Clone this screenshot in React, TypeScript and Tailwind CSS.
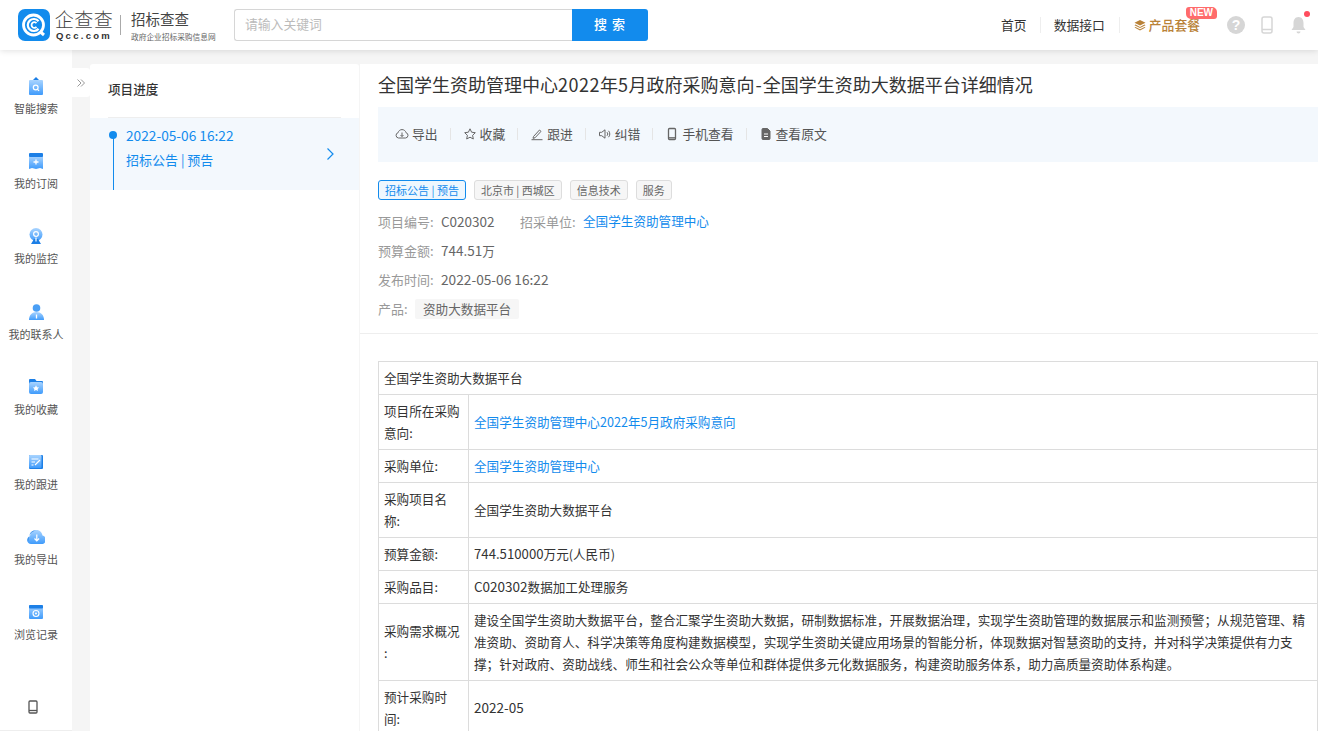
import React from "react";

const cjk = { fontFamily: '"Noto Sans CJK SC", "Liberation Sans", sans-serif' };

function Grad({ id }: { id: string }) {
  return (
    <defs>
      <linearGradient id={id} x1="0" y1="0" x2="0" y2="1">
        <stop offset="0" stopColor="#a9d4ff" />
        <stop offset="1" stopColor="#3f9bfb" />
      </linearGradient>
    </defs>
  );
}

const side: { label: string; icon: React.ReactNode }[] = [
  {
    label: "智能搜索",
    icon: (
      <svg width="18" height="20" viewBox="0 0 18 20">
        <Grad id="g1" />
        <path d="M3 4h12a1 1 0 0 1 1 1v13a1 1 0 0 1-1 1H3a1 1 0 0 1-1-1V5a1 1 0 0 1 1-1z" fill="url(#g1)" />
        <path d="M6 4l3-3 3 3z" fill="#1c7fe6" />
        <circle cx="8.7" cy="11.5" r="2.4" fill="none" stroke="#fff" strokeWidth="1.2" />
        <path d="M10.5 13.3l1.6 1.6" stroke="#fff" strokeWidth="1.2" />
      </svg>
    ),
  },
  {
    label: "我的订阅",
    icon: (
      <svg width="14" height="16" viewBox="0 0 14 16">
        <Grad id="g2" />
        <path d="M0 3h14v13l-3-1-4 1-4-1-3 1z" fill="url(#g2)" />
        <rect width="14" height="4" rx="1" fill="#1c7fe6" />
        <path d="M7 6.5v5M4.5 9h5" stroke="#fff" strokeWidth="1.3" />
      </svg>
    ),
  },
  {
    label: "我的监控",
    icon: (
      <svg width="14" height="16" viewBox="0 0 14 16">
        <Grad id="g3" />
        <circle cx="7" cy="6.5" r="6.5" fill="url(#g3)" />
        <circle cx="7" cy="6" r="2.4" fill="none" stroke="#fff" strokeWidth="1.2" />
        <path d="M2 16l3-5h4l3 5z" fill="#1c7fe6" />
        <path d="M7 9.5v4" stroke="#fff" strokeWidth="1.2" />
      </svg>
    ),
  },
  {
    label: "我的联系人",
    icon: (
      <svg width="15" height="16" viewBox="0 0 15 16">
        <Grad id="g4" />
        <circle cx="7.5" cy="4" r="3.8" fill="#4a9ff5" />
        <path d="M0 16c0-5 3-8 7.5-8S15 11 15 16z" fill="url(#g4)" />
        <path d="M7.5 10.5v4" stroke="#fff" strokeWidth="1.3" />
      </svg>
    ),
  },
  {
    label: "我的收藏",
    icon: (
      <svg width="14" height="15" viewBox="0 0 14 15">
        <Grad id="g5" />
        <path d="M1 0h5l1.5 2H13a1 1 0 0 1 1 1v3H0V1a1 1 0 0 1 1-1z" fill="#1c7fe6" />
        <rect y="3" width="14" height="12" rx="2" fill="url(#g5)" />
        <path d="M7 6.3l1 2 2.100.2-1.500 1.500.4 2.100L7 11l-2 1.100.4-2.100L3.900 8.500 6 8.300z" fill="#fff" />
      </svg>
    ),
  },
  {
    label: "我的跟进",
    icon: (
      <svg width="14" height="14" viewBox="0 0 14 14">
        <Grad id="g6" />
        <rect width="14" height="14" rx="1" fill="#1c7fe6" />
        <rect width="12.500" height="13" rx="1" fill="url(#g6)" />
        <path d="M2.500 4h7M2.500 7h3.500M2.500 10h2M6 10l5-5" stroke="#fff" strokeWidth="1.100" />
      </svg>
    ),
  },
  {
    label: "我的导出",
    icon: (
      <svg width="18" height="14" viewBox="0 0 18 14">
        <Grad id="g7" />
        <path d="M4 14a4 4 0 0 1-1-7.800C3.500 2.500 6.500 0 9.500 0c3.500 0 5.500 2.500 6 5.500A4.300 4.300 0 0 1 14 14z" fill="url(#g7)" />
        <path d="M1.500 9C1.500 5 5 1 9 .5 5 0 2.500 3 2.500 6 1 7 0 9 1 12z" fill="#1c7fe6" />
        <path d="M9.800 4.500v6M7.500 8.500l2.300 2.300 2.300-2.300" stroke="#fff" strokeWidth="1.200" fill="none" />
      </svg>
    ),
  },
  {
    label: "浏览记录",
    icon: (
      <svg width="14" height="14" viewBox="0 0 14 14">
        <Grad id="g8" />
        <rect width="14" height="14" rx="1" fill="url(#g8)" />
        <rect width="14" height="3.500" rx="1" fill="#1c7fe6" />
        <circle cx="7" cy="8.500" r="3" fill="none" stroke="#fff" strokeWidth="1.100" />
        <circle cx="7" cy="8.500" r="1" fill="#fff" />
      </svg>
    ),
  },
];

const act = (d: React.ReactNode) => (
  <svg width="14" height="14" viewBox="0 0 14 14" fill="none" stroke="#666" strokeWidth="1">
    {d}
  </svg>
);

const actions: { label: string; icon: React.ReactNode }[] = [
  {
    label: "导出",
    icon: act(
      <>
        <path d="M3.500 11a2.700 2.700 0 0 1-.400-5.300C3.600 3.700 5.200 2.600 7 2.600c2 0 3.500 1.200 4 3.100A2.700 2.700 0 0 1 10.500 11z" />
        <path d="M7 5.500v4M5.500 8L7 9.500 8.500 8" />
      </>
    ),
  },
  {
    label: "收藏",
    icon: act(<path d="M7 1.800l1.600 3.400 3.700.5-2.700 2.600.7 3.700L7 10.200l-3.300 1.800.7-3.700L1.700 5.700l3.700-.5z" />),
  },
  {
    label: "跟进",
    icon: act(
      <>
        <path d="M3.500 9.500l6-6.500 1.500 1.400-6 6.400-2 .5z" />
        <path d="M1.500 12.700h11" />
      </>
    ),
  },
  {
    label: "纠错",
    icon: act(
      <>
        <path d="M1.500 5.300h2.200L7 2.800v8.400L3.700 8.700H1.500z" />
        <path d="M9 5.200a2.600 2.600 0 0 1 0 3.600M10.500 3.800a4.600 4.600 0 0 1 0 6.400" />
      </>
    ),
  },
  {
    label: "手机查看",
    icon: act(
      <>
        <rect x="3.500" y="1.500" width="7" height="11" rx="1" strokeWidth="1.300" />
        <path d="M3.500 10.800h7" strokeWidth="1.300" />
      </>
    ),
  },
  {
    label: "查看原文",
    icon: act(
      <>
        <path d="M3 2.500A1 1 0 0 1 4 1.500h4.500L11 4v7.500a1 1 0 0 1-1 1H4a1 1 0 0 1-1-1z" fill="#666" />
        <path d="M5 7h4M5 9.500h4" stroke="#fff" />
      </>
    ),
  },
];

const link = "text-[#128bed]";
const td = "border border-[#dcdcdc] px-[5px] py-[5px] leading-[22px] align-middle font-normal text-left";
const num = "text-[13.500px]";
const tnum = "text-[13.500px] leading-none";

export default function App() {
  return (
    <div style={cjk} className="w-[1318px] h-[731px] overflow-hidden bg-[#f5f5f5] flex flex-col text-[#333]">
      <header className="relative z-10 h-[50px] shrink-0 bg-white shadow-[0_1px_6px_rgba(0,0,0,0.12)] flex items-center">
        <div className="ml-[18px] flex items-center w-[216px] shrink-0">
          <svg width="32" height="32" viewBox="0 0 32 32" className="shrink-0">
            <rect width="32" height="32" rx="7" fill="#128bed" />
            <circle cx="15.500" cy="16" r="10" fill="none" stroke="#fff" strokeWidth="2.800" />
            <path d="M20.500 12.300a6 6 0 1 0 0 7.400" fill="none" stroke="#fff" strokeWidth="2.200" />
            <path d="M18.500 14.200a2.800 2.800 0 1 0 0 3.600" fill="none" stroke="#fff" strokeWidth="1.800" />
            <path d="M22.500 23l3.500 3" stroke="#fff" strokeWidth="3" />
          </svg>
          <div className="ml-[5px] flex flex-col items-center w-[58px]">
            <span className="text-[19px] leading-[20px] font-light text-[#444] tracking-[0.5px] whitespace-nowrap">企查查</span>
            <span style={{ fontFamily: '"Liberation Sans", sans-serif' }} className="text-[9.500px] leading-[12px] mt-[1px] font-bold text-[#333] tracking-[2.300px] whitespace-nowrap">Qcc.com</span>
          </div>
          <div className="w-px h-[20px] bg-[#aaa] ml-[7px]" />
          <div className="ml-[10px] flex flex-col">
            <span className="text-[14.500px] leading-[20px] text-[#444] whitespace-nowrap">招标查查</span>
            <span className="text-[7.700px] leading-[11px] mt-[2px] text-[#666] whitespace-nowrap">政府企业招标采购信息网</span>
          </div>
        </div>
        <div className="flex h-[32px] ml-0">
          <div className="w-[338px] h-full border border-[#d6d6d6] border-r-0 rounded-l-[3px] px-[10px] text-[12.800px] leading-[28px] text-[#bbb]">请输入关键词</div>
          <div className="w-[76px] h-full bg-[#128bed] rounded-r-[3px] text-white text-[13px] leading-[30px] text-center font-medium tracking-[1px]">搜 索</div>
        </div>
        <div className="ml-auto flex items-center h-full text-[12.800px] text-[#333]">
          <span>首页</span>
          <div className="w-px h-[16px] bg-[#eee] mx-[13px]" />
          <span>数据接口</span>
          <div className="w-px h-[16px] bg-[#eee] mx-[14px]" />
          <div className="relative flex items-center text-[#b98238] font-medium">
            <svg width="12" height="12" viewBox="0 0 12 12" className="mr-[3px]" fill="#b98238">
              <path d="M6 1l5.500 2.800L6 6.600.5 3.800z" />
              <path d="M1.500 5.600L6 8l4.500-2.400 1 .6L6 9.100.5 6.200z" />
              <path d="M1.500 7.900L6 10.300l4.500-2.400 1 .6L6 11.400.5 8.500z" />
            </svg>
            产品套餐
            <span style={{ fontFamily: '"Liberation Sans", sans-serif' }} className="absolute -top-[8px] -right-[17px] h-[12px] px-[4px] bg-[#ff6b6b] text-white text-[10px] leading-[12px] font-bold rounded-[3px_5px_3px_5px]">NEW</span>
          </div>
          <svg width="20" height="20" viewBox="0 0 20 20" className="ml-[26px]">
            <circle cx="10" cy="10" r="9" fill="#d6d6d6" />
            <text x="10" y="15" textAnchor="middle" fontSize="14" fontWeight="700" fill="#fff" fontFamily="Liberation Sans">?</text>
          </svg>
          <svg width="12" height="18" viewBox="0 0 12 18" className="ml-[15px]" fill="none" stroke="#d6d6d6" strokeWidth="1.500">
            <rect x="1" y="1" width="10" height="16" rx="2" />
            <path d="M1 13.500h10" />
          </svg>
          <div className="relative ml-[18px] mr-[12px]">
            <svg width="15" height="18" viewBox="0 0 15 18" fill="#d6d6d6" className="block">
              <path d="M7.500 1C11 1 12.500 4 12.500 7v4l2 3H.5l2-3V7C2.500 4 4 1 7.500 1z" />
              <path d="M5.500 15.500h4a2 2 0 0 1-4 0z" />
            </svg>
            <span className="absolute -top-[5px] right-[-4px] w-[6px] h-[6px] rounded-full bg-[#ff4d5e]" />
          </div>
        </div>
      </header>

      <div className="flex flex-1 min-h-0">
        <aside className="w-[72px] shrink-0 bg-white flex flex-col items-center relative border-b border-[#eee]">
          <div className="pt-[26px] flex flex-col w-full">
            {side.map((s) => (
              <div key={s.label} className="h-[75.200px] flex flex-col items-center">
                <div className="h-[20px] flex items-center justify-center">{s.icon}</div>
                <span className="mt-[4px] text-[11px] leading-[16px] text-[#555] whitespace-nowrap">{s.label}</span>
              </div>
            ))}
          </div>
          <svg width="10" height="14" viewBox="0 0 10 14" className="absolute top-[650px] left-[28px]" fill="none" stroke="#555" strokeWidth="1.300">
            <rect x="1" y="1" width="8" height="12" rx="1" />
            <path d="M1 10.500h8" />
          </svg>
        </aside>

        <div className="w-[18px] shrink-0">
          <div className="mt-[18px] h-[29px] w-[18px] bg-white rounded-r-[3px] flex items-center justify-center text-[#999]">
            <svg width="10" height="10" viewBox="0 0 10 10" fill="none" stroke="#999" strokeWidth="1">
              <path d="M1.500 1.500L5 5l-3.500 3.500M5 1.500L8.500 5 5 8.500" />
            </svg>
          </div>
        </div>

        <div className="w-[269px] shrink-0 mt-[14px] bg-white rounded-t-[3px]">
          <div className="mx-[18px] h-[54px] border-b border-[#eee] text-[12.600px] font-medium text-[#333] leading-[50px]">项目进度</div>
          <div className="h-[72px] bg-[#f3f8fd] relative flex items-center text-[#128bed]">
            <span className="absolute left-[19px] top-[13px] w-[8px] h-[8px] rounded-full bg-[#128bed]" />
            <span className="absolute left-[23px] top-[18px] bottom-0 w-px bg-[#128bed]" />
            <div className="ml-[36px] text-[13px] self-start pt-[7px]">
              <div className="leading-[20px] text-[13.700px]">2022-05-06 16:22</div>
              <div className="leading-[20px] mt-[5px]">招标公告 | 预告</div>
            </div>
            <svg width="9" height="14" viewBox="0 0 9 14" className="ml-auto mr-[24px]" fill="none" stroke="#128bed" strokeWidth="1.200">
              <path d="M1.500 1.500L7 7l-5.500 5.500" />
            </svg>
          </div>
        </div>

        <main className="flex-1 min-w-0 mt-[14px] ml-px bg-white overflow-hidden">
          <div className="pl-[18px] border-b border-[#eee] pb-[10px]">
            <h1 className="text-[18px] leading-[24px] font-normal text-[#333] pt-[8px] whitespace-nowrap">
              全国学生资助管理中心<span className="tracking-[0.5px]">2022</span>年<span className="tracking-[0.5px]">5</span>月政府采购意向<span className="px-[1px]">-</span>全国学生资助大数据平台详细情况
            </h1>
            <div className="mt-[11px] h-[55px] bg-[#f3f8fd] flex items-center pl-[17px] pb-[2px] text-[12.800px] text-[#555]">
              {actions.map((a, i) => (
                <React.Fragment key={a.label}>
                  {i > 0 && <div className="w-px h-[12px] bg-[#e5e5e5] mx-[12px]" />}
                  <div className="flex items-center gap-[3px] whitespace-nowrap">
                    {a.icon}
                    <span>{a.label}</span>
                  </div>
                </React.Fragment>
              ))}
            </div>
            <div className="mt-[18px] flex gap-[8px] text-[11px] leading-[18px]">
              <span className="h-[20px] px-[6px] border border-[#128bed] rounded-[3px] bg-[#eef7fe] text-[#128bed]">招标公告 | 预告</span>
              <span className="h-[20px] px-[6px] border border-[#ddd] rounded-[3px] bg-[#f6f6f6] text-[#666]">北京市 | 西城区</span>
              <span className="h-[20px] px-[6px] border border-[#ddd] rounded-[3px] bg-[#f6f6f6] text-[#666]">信息技术</span>
              <span className="h-[20px] px-[6px] border border-[#ddd] rounded-[3px] bg-[#f6f6f6] text-[#666]">服务</span>
            </div>
            <div className="mt-[7px] text-[13px] text-[#666]">
              <div className="h-[29px] flex items-center">
                <span className="text-[#999] w-[63px]">项目编号:</span>
                <span className={`w-[79px] ${num}`}>C020302</span>
                <span className="text-[#999] w-[63px]">招采单位:</span>
                <span className={`${link} text-[12.600px]`}>全国学生资助管理中心</span>
              </div>
              <div className="h-[29px] flex items-center">
                <span className="text-[#999] w-[63px]">预算金额:</span>
                <span className={num}>744.51<span className="text-[12.600px]">万</span></span>
              </div>
              <div className="h-[29px] flex items-center">
                <span className="text-[#999] w-[63px]">发布时间:</span>
                <span className="text-[13.700px]">2022-05-06 16:22</span>
              </div>
              <div className="h-[29px] flex items-center">
                <span className="text-[#999] w-[37px]">产品:</span>
                <span className="h-[20px] px-[8px] bg-[#f6f6f6] leading-[20px] rounded-[2px] text-[12.600px]">资助大数据平台</span>
              </div>
            </div>
          </div>

          <div className="pl-[18px] pt-[27px]">
            <table className="w-[940px] border-collapse table-fixed text-[12.600px] text-[#333]">
              <colgroup>
                <col className="w-[90px]" />
                <col />
              </colgroup>
              <tbody>
                <tr><td className={td} colSpan={2}>全国学生资助大数据平台</td></tr>
                <tr><td className={td}>项目所在采购<br />意向:</td><td className={`${td} ${link}`}>全国学生资助管理中心2022年5月政府采购意向</td></tr>
                <tr><td className={td}>采购单位:</td><td className={`${td} ${link}`}>全国学生资助管理中心</td></tr>
                <tr><td className={td}>采购项目名<br />称:</td><td className={td}>全国学生资助大数据平台</td></tr>
                <tr><td className={td}>预算金额:</td><td className={td}><span className="text-[13.200px] leading-none">744.510000</span>万元(人民币)</td></tr>
                <tr><td className={td}>采购品目:</td><td className={td}><span className={tnum}>C020302</span>数据加工处理服务</td></tr>
                <tr>
                  <td className={td}>采购需求概况<br />:</td>
                  <td className={td}>建设全国学生资助大数据平台，整合汇聚学生资助大数据，研制数据标准，开展数据治理，实现学生资助管理的数据展示和监测预警；从规范管理、精准资助、资助育人、科学决策等角度构建数据模型，实现学生资助关键应用场景的智能分析，体现数据对智慧资助的支持，并对科学决策提供有力支撑；针对政府、资助战线、师生和社会公众等单位和群体提供多元化数据服务，构建资助服务体系，助力高质量资助体系构建。</td>
                </tr>
                <tr><td className={td}>预计采购时<br />间:</td><td className={td}><span className={tnum}>2022-05</span></td></tr>
              </tbody>
            </table>
          </div>
        </main>
      </div>
    </div>
  );
}
